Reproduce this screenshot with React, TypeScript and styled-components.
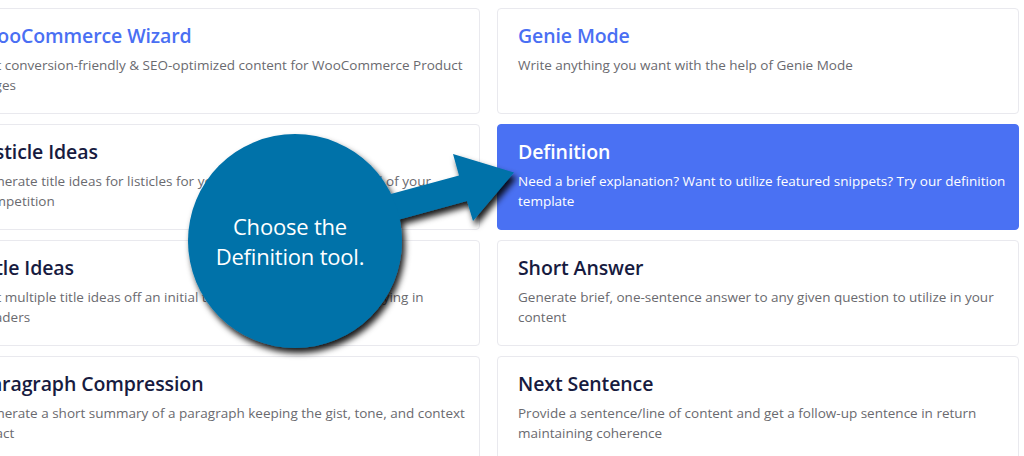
import React from "react";
import styled, { createGlobalStyle } from "styled-components";

const GlobalStyle = createGlobalStyle`
  html, body {
    margin: 0;
    padding: 0;
    background: #ffffff;
    overflow: hidden;
  }
  body {
    font-family: "Open Sans", "Noto Sans", "Liberation Sans", sans-serif;
  }
`;

const Page = styled.div`
  position: relative;
  width: 1024px;
  height: 456px;
  overflow: hidden;
  background: #ffffff;
`;

const Grid = styled.div`
  display: grid;
  grid-template-columns: 522px 522px;
  grid-auto-rows: 106px;
  column-gap: 17px;
  row-gap: 10px;
  margin-left: -42px;
  padding-top: 8px;
`;

const Card = styled.div<{ $active?: boolean }>`
  box-sizing: border-box;
  height: 106px;
  padding: 13px 20px 0 20px;
  border: 1px solid ${(p) => (p.$active ? "#4a71f3" : "#e9e9ee")};
  border-radius: 4px;
  background: ${(p) => (p.$active ? "#4a71f3" : "#ffffff")};
  overflow: hidden;
`;

const Title = styled.div<{ $tone: "link" | "dark" | "light" }>`
  font-size: 19.5px;
  line-height: 27px;
  font-weight: 600;
  letter-spacing: -0.1px;
  white-space: nowrap;
  color: ${(p) =>
    p.$tone === "link" ? "#4a6ff3" : p.$tone === "light" ? "#ffffff" : "#171b3f"};
`;

const Desc = styled.div<{ $light?: boolean }>`
  margin-top: 6px;
  font-size: 13.5px;
  line-height: 20px;
  white-space: nowrap;
  color: ${(p) => (p.$light ? "#ffffff" : "#6a6a6f")};
`;

const Overlay = styled.div`
  position: absolute;
  inset: 0;
  pointer-events: none;
`;

const CalloutSvg = styled.svg`
  position: absolute;
  left: 0;
  top: 0;
`;

const CalloutLabel = styled.div`
  position: absolute;
  left: 190px;
  top: 138px;
  width: 200px;
  height: 206px;
  display: flex;
  align-items: center;
  justify-content: center;
  text-align: center;
  color: #ffffff;
  font-family: "Open Sans", "Noto Sans", sans-serif;
  font-size: 22px;
  line-height: 30px;
  letter-spacing: -0.2px;
`;

type Tool = {
  title: string;
  lines: string[];
  tone: "link" | "dark" | "light";
  active?: boolean;
};

const tools: Tool[] = [
  {
    title: "WooCommerce Wizard",
    lines: [
      "Get conversion-friendly & SEO-optimized content for WooCommerce Product",
      "Pages",
    ],
    tone: "link",
  },
  {
    title: "Genie Mode",
    lines: ["Write anything you want with the help of Genie Mode"],
    tone: "link",
  },
  {
    title: "Listicle Ideas",
    lines: [
      "Generate title ideas for listicles for your blog posts to stay ahead of your",
      "competition",
    ],
    tone: "dark",
  },
  {
    title: "Definition",
    lines: [
      "Need a brief explanation? Want to utilize featured snippets? Try our definition",
      "template",
    ],
    tone: "light",
    active: true,
  },
  {
    title: "Title Ideas",
    lines: [
      "Get multiple title ideas off an initial title with different hooks, varying in",
      "headers",
    ],
    tone: "dark",
  },
  {
    title: "Short Answer",
    lines: [
      "Generate brief, one-sentence answer to any given question to utilize in your",
      "content",
    ],
    tone: "dark",
  },
  {
    title: "Paragraph Compression",
    lines: [
      "Generate a short summary of a paragraph keeping the gist, tone, and context",
      "intact",
    ],
    tone: "dark",
  },
  {
    title: "Next Sentence",
    lines: [
      "Provide a sentence/line of content and get a follow-up sentence in return",
      "maintaining coherence",
    ],
    tone: "dark",
  },
];

const Callout = () => (
  <Overlay>
    <CalloutSvg width={1024} height={456} viewBox="0 0 1024 456">
      <defs>
        <filter id="callShadow" x="-20%" y="-20%" width="150%" height="150%">
          <feDropShadow dx="3" dy="5" stdDeviation="3" floodColor="#000000" floodOpacity="0.9" />
        </filter>
      </defs>
      <g filter="url(#callShadow)" fill="#0072a9">
        <polygon points="365,201 459,175.5 453,154 514,172.5 473,221 467,201 372,227" />
        <circle cx="295" cy="241" r="107" />
      </g>
    </CalloutSvg>
    <CalloutLabel>
      Choose the
      <br />
      Definition tool.
    </CalloutLabel>
  </Overlay>
);

export default function App() {
  return (
    <>
      <GlobalStyle />
      <Page>
        <Grid>
          {tools.map((t) => (
            <Card key={t.title} $active={t.active}>
              <Title $tone={t.tone}>{t.title}</Title>
              <Desc $light={t.active}>
                {t.lines.map((l, i) => (
                  <React.Fragment key={i}>
                    {i > 0 && <br />}
                    {l}
                  </React.Fragment>
                ))}
              </Desc>
            </Card>
          ))}
        </Grid>
        <Callout />
      </Page>
    </>
  );
}
